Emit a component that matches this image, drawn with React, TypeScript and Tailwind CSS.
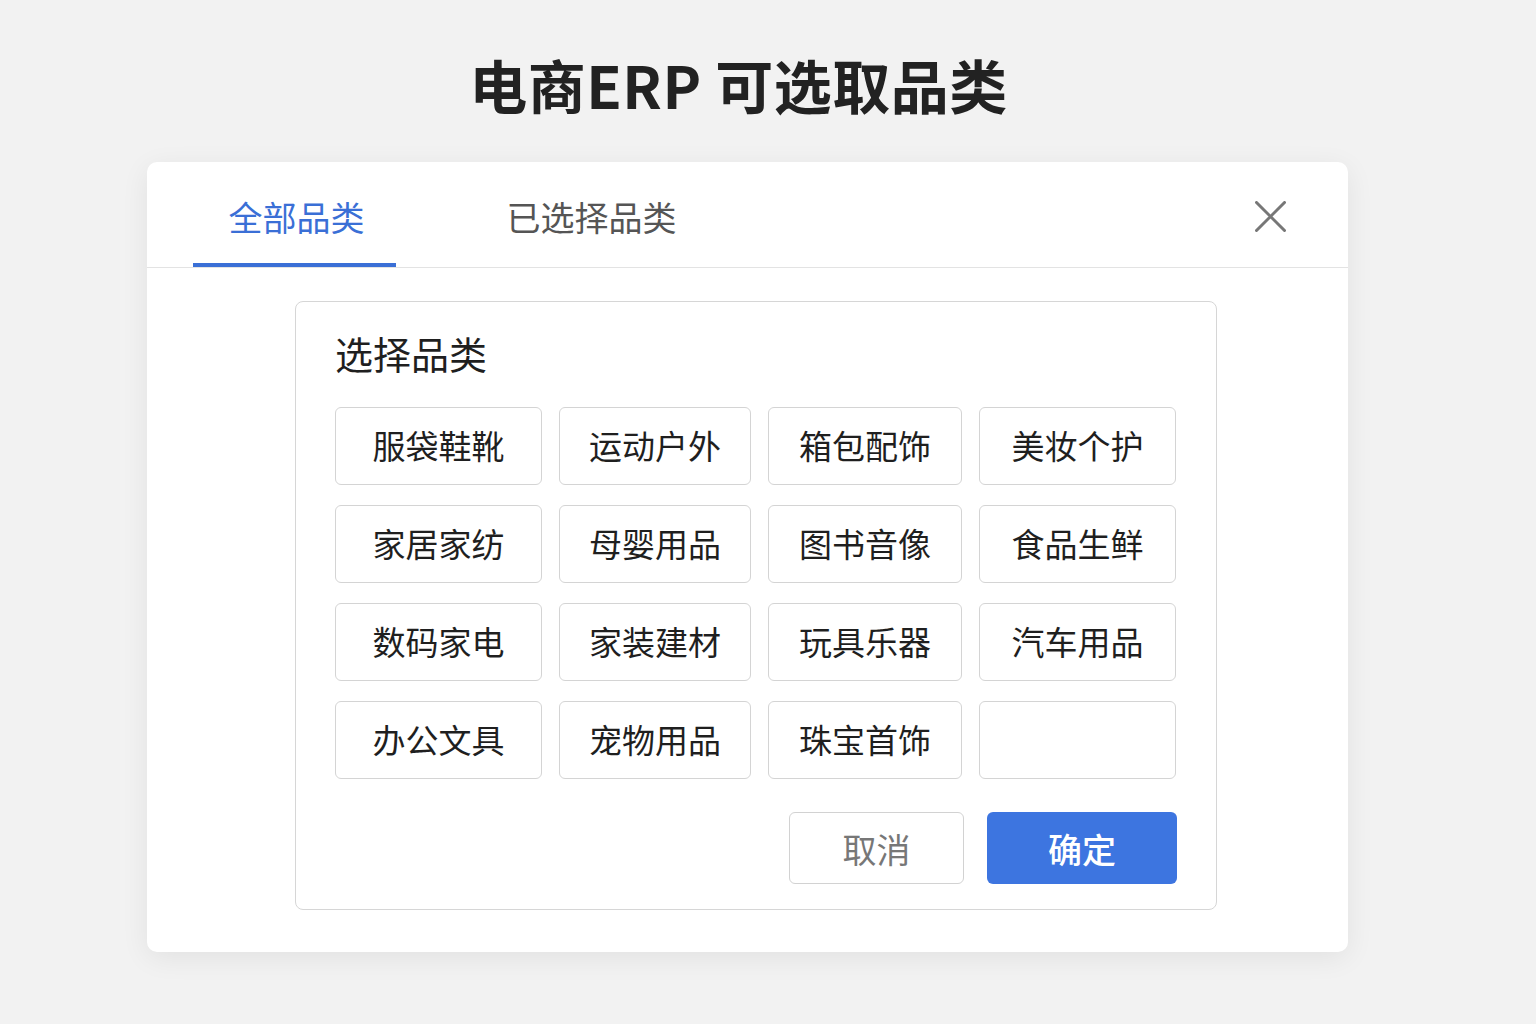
import React from "react";

const rows: string[][] = [
  ["服袋鞋靴", "运动户外", "箱包配饰", "美妆个护"],
  ["家居家纺", "母婴用品", "图书音像", "食品生鲜"],
  ["数码家电", "家装建材", "玩具乐器", "汽车用品"],
  ["办公文具", "宠物用品", "珠宝首饰", ""],
];

const font = { fontFamily: '"Noto Sans CJK SC", "Noto Sans", sans-serif' };

export default function App() {
  return (
    <div className="min-h-screen w-full bg-[#f2f2f2] pt-[48px]" style={font}>
      <div className="ml-[147px] w-[1201px]">
        <h1 className="pr-[18px] text-center text-[58px] font-bold leading-[72px] tracking-[0.5px] text-[#222222]">
          电商ERP 可选取品类
        </h1>
        <div className="mt-[42px] h-[790px] rounded-[10px] bg-white shadow-[0_6px_28px_rgba(0,0,0,0.07)]">
          <div className="flex h-[106px] items-start border-b border-[#e3e3e3] pl-[46px] pr-[60px]">
            <div className="flex h-[105px] w-[203px] flex-col items-center justify-between">
              <span className="pl-[4px] pt-[33px] text-[34px] leading-[44px] text-[#3a6fd6]">全部品类</span>
              <div className="h-[4px] w-full bg-[#3a6fd6]" />
            </div>
            <div className="ml-[94px] flex h-[105px] w-[203px] flex-col items-center">
              <span className="pt-[33px] text-[34px] leading-[44px] text-[#555555]">已选择品类</span>
            </div>
            <div className="ml-auto pr-[2px] pt-[39px]">
              <svg width="31" height="31" viewBox="0 0 31 31" fill="none">
                <path d="M1.5 1.5 L29.5 29.5 M29.5 1.5 L1.5 29.5" stroke="#777777" strokeWidth="3" strokeLinecap="round" />
              </svg>
            </div>
          </div>
          <div className="ml-[148px] mt-[33px] w-[922px] rounded-[8px] border border-[#d6d6d6] px-[39px] pb-[25px] pt-[27px]">
            <h2 className="text-[38px] font-normal leading-[48px] text-[#1f1f1f]">选择品类</h2>
            <div className="mt-[30px] grid grid-cols-[207px_192px_194px_197px] gap-x-[17px] gap-y-[20px]">
              {rows.flat().map((c, i) => (
                <div
                  key={i}
                  className="flex h-[78px] items-center justify-center rounded-[6px] border border-[#d4d4d4] bg-white text-[33px] text-[#1f1f1f]"
                >
                  {c}
                </div>
              ))}
            </div>
            <div className="mt-[33px] flex justify-end gap-[23px]">
              <button className="flex h-[72px] w-[175px] items-center justify-center rounded-[6px] border border-[#d2d2d2] bg-white text-[34px] text-[#777777]">
                取消
              </button>
              <button className="flex h-[72px] w-[190px] items-center justify-center rounded-[6px] bg-[#3d75e0] text-[34px] font-medium text-white">
                确定
              </button>
            </div>
          </div>
        </div>
      </div>
    </div>
  );
}
